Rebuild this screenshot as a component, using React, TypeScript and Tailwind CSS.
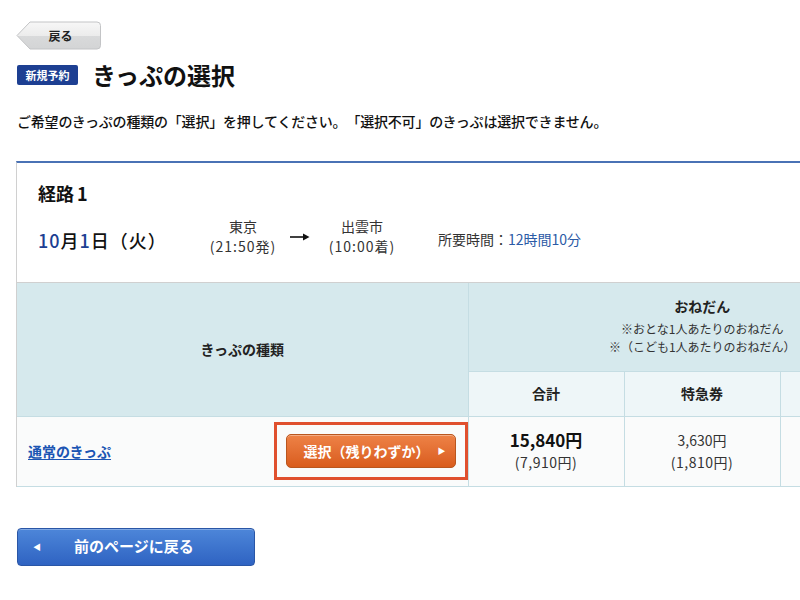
import React from "react";

function BackTab() {
  return (
    <div className="relative flex h-[29px] w-[86px] items-center justify-center">
      <svg className="absolute inset-0" width="86" height="29" viewBox="0 0 86 29">
        <defs>
          <linearGradient id="tab" x1="0" y1="0" x2="0" y2="1">
            <stop offset="0" stopColor="#f7f7f7" />
            <stop offset="0.5" stopColor="#ececec" />
            <stop offset="0.52" stopColor="#d9dadb" />
            <stop offset="1" stopColor="#d3d4d5" />
          </linearGradient>
        </defs>
        <path
          d="M1 14.5 L14 1 H81 Q84.5 1 84.5 4.5 V24.5 Q84.5 28 81 28 H14 Z"
          fill="url(#tab)"
          stroke="#c3c4c6"
          strokeWidth="1"
        />
      </svg>
      <span className="relative ml-[3px] text-[12px] font-bold leading-none text-[#222]">戻る</span>
    </div>
  );
}

function Station({ name, time }: { name: string; time: string }) {
  return (
    <div className="w-[70px] text-center text-[14px] leading-[20px] text-[#333]">
      <div>{name}</div>
      <div className="tracking-[1px]">{time}</div>
    </div>
  );
}

export default function App() {
  return (
    <div className="min-h-[600px] w-full overflow-hidden bg-white font-['Noto_Sans_CJK_JP',sans-serif] text-[#222] [text-spacing-trim:space-all]">
      <div className="pl-[16px] pt-[21px]">
        <BackTab />

        <div className="mt-[12px] flex h-[26px] items-center">
          <span className="ml-[1px] flex h-[20px] w-[61px] items-center justify-center rounded-[2px] bg-[#1d3f92] text-[11px] font-bold leading-none text-white">
            新規予約
          </span>
          <h1 className="ml-[14px] text-[24px] font-bold leading-[26px] text-[#111]">きっぷの選択</h1>
        </div>

        <p className="mt-[24px] pl-[1px] text-[14px] font-medium leading-[18px] tracking-[-0.2px] text-[#111]">
          ご希望のきっぷの種類の「選択」を押してください。「選択不可」のきっぷは選択できません。
        </p>

        <div className="mt-[31px] w-[920px] border-l border-t-2 border-l-[#d0d0d0] border-t-[#4a72b5]">
          {/* route summary */}
          <div className="h-[120px] border-b border-[#d0d0d0] pl-[21px] pt-[18px]">
            <div className="text-[18px] font-bold leading-[24px] text-[#111]">
              経路<span className="ml-[3px]">1</span>
            </div>
            <div className="mt-[11px] flex items-start">
              <div className="mt-[12px] w-[170px] text-[18px] font-medium leading-[24px] tracking-[1px] text-[#111]">
                <span className="text-[#1d3f92]">10</span>月<span className="text-[#1d3f92]">1</span>日（火）
              </div>
              <Station name="東京" time="(21:50発)" />
              <svg className="ml-[12px] mr-[17px] mt-[17px]" width="20" height="8" viewBox="0 0 20 8">
                <path d="M0 4 H15" stroke="#111" strokeWidth="1.6" />
                <path d="M13 0.5 L19.5 4 L13 7.5 Z" fill="#111" />
              </svg>
              <Station name="出雲市" time="(10:00着)" />
              <div className="ml-[41px] mt-[14px] text-[14px] leading-[18px] text-[#333]">
                所要時間：<span className="text-[#2b5aa6]">12時間10分</span>
              </div>
            </div>
          </div>

          {/* fares */}
          <table className="w-full table-fixed border-collapse text-[14px]">
            <colgroup>
              <col className="w-[451px]" />
              <col className="w-[156px]" />
              <col className="w-[156px]" />
              <col className="w-[156px]" />
            </colgroup>
            <thead>
              <tr className="h-[88px] bg-[#d6e9ed]">
                <th rowSpan={2} className="border-r border-[#c5dde3] text-center font-bold text-[#222]">
                  きっぷの種類
                </th>
                <th colSpan={3} className="pb-[2px] text-center align-middle">
                  <div className="font-bold leading-[20px] text-[#222]">おねだん</div>
                  <div className="mt-[4px] text-[12px] font-normal leading-[18px] text-[#333]">※おとな1人あたりのおねだん</div>
                  <div className="text-[12px] font-normal leading-[18px] text-[#333]">※（こども1人あたりのおねだん）</div>
                </th>
              </tr>
              <tr className="h-[45px] bg-[#eef6f8]">
                <th className="border-r border-t border-[#c5dde3] font-bold text-[#222]">合計</th>
                <th className="border-r border-t border-[#c5dde3] font-bold text-[#222]">特急券</th>
                <th className="border-t border-[#c5dde3]" />
              </tr>
            </thead>
            <tbody>
              <tr className="h-[70px] border-y border-[#c5dde3] bg-[#fafbfb]">
                <td className="border-r border-[#c5dde3] p-0">
                  <div className="flex items-center justify-between pl-[11px]">
                    <a href="#" className="font-bold text-[#1b55b3] underline underline-offset-2">
                      通常のきっぷ
                    </a>
                    <div className="border-[3px] border-[#e0502e] p-[9px]">
                      <button className="flex h-[34px] w-[170px] items-center justify-center rounded-[5px] border border-[#b9561f] bg-gradient-to-b from-[#ee8246] to-[#d95c1c] text-[14px] font-bold text-white shadow-[inset_0_1px_0_rgba(255,255,255,0.35)]">
                        <span className="ml-[8px]">選択（残りわずか）</span>
                        <span className="ml-[8px] text-[8px]">▶</span>
                      </button>
                    </div>
                  </div>
                </td>
                <td className="border-r border-[#c5dde3] text-center">
                  <div className="text-[17px] font-bold leading-[22px] text-[#111]">15,840円</div>
                  <div className="text-[14px] leading-[22px] tracking-[0.5px] text-[#333]">(7,910円)</div>
                </td>
                <td className="border-r border-[#c5dde3] text-center">
                  <div className="text-[14px] leading-[22px] text-[#333]">3,630円</div>
                  <div className="text-[14px] leading-[22px] tracking-[0.5px] text-[#333]">(1,810円)</div>
                </td>
                <td />
              </tr>
            </tbody>
          </table>
        </div>

        <button className="ml-[1px] mt-[41px] flex h-[38px] w-[238px] items-center rounded-[4px] border border-[#2a56a6] bg-gradient-to-b from-[#4d86d9] to-[#2f63c2] text-white shadow-[inset_0_1px_0_rgba(255,255,255,0.3)]">
          <span className="ml-[15px] text-[8px]">◀</span>
          <span className="ml-[33px] text-[15px] font-bold">前のページに戻る</span>
        </button>
      </div>
    </div>
  );
}
